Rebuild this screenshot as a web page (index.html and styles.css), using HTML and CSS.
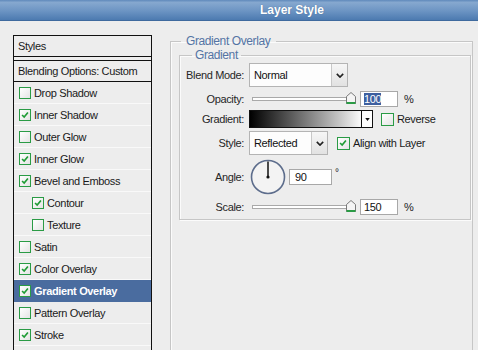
FILE: index.html
```html
<!DOCTYPE html>
<html>
<head>
<meta charset="utf-8">
<link rel="stylesheet" href="styles.css">
</head>
<body>
<div class="titlebar"><span class="title">Layer Style</span></div>
<div class="main">
  <div class="stylelist">
    <div class="head">Styles</div>
    <div class="blend">Blending Options: Custom</div>
    <div class="item"><span class="cb"></span>Drop Shadow</div>
    <div class="item"><span class="cb on"><svg viewBox="0 0 12 12"><polyline points="2.5,6 5,8.5 9.5,3"/></svg></span>Inner Shadow</div>
    <div class="item"><span class="cb"></span>Outer Glow</div>
    <div class="item"><span class="cb on"><svg viewBox="0 0 12 12"><polyline points="2.5,6 5,8.5 9.5,3"/></svg></span>Inner Glow</div>
    <div class="item"><span class="cb on"><svg viewBox="0 0 12 12"><polyline points="2.5,6 5,8.5 9.5,3"/></svg></span>Bevel and Emboss</div>
    <div class="item sub"><span class="cb on"><svg viewBox="0 0 12 12"><polyline points="2.5,6 5,8.5 9.5,3"/></svg></span>Contour</div>
    <div class="item sub"><span class="cb"></span>Texture</div>
    <div class="item"><span class="cb"></span>Satin</div>
    <div class="item"><span class="cb on"><svg viewBox="0 0 12 12"><polyline points="2.5,6 5,8.5 9.5,3"/></svg></span>Color Overlay</div>
    <div class="item selected"><span class="cb on"><svg viewBox="0 0 12 12"><polyline points="2.5,6 5,8.5 9.5,3"/></svg></span>Gradient Overlay</div>
    <div class="item"><span class="cb"></span>Pattern Overlay</div>
    <div class="item"><span class="cb on"><svg viewBox="0 0 12 12"><polyline points="2.5,6 5,8.5 9.5,3"/></svg></span>Stroke</div>
  </div>

  <fieldset class="outer">
    <legend>Gradient Overlay</legend>
    <fieldset class="inner">
      <legend>Gradient</legend>
      <div class="grid">
        <label class="lbl">Blend Mode:</label>
        <div class="ctl">
          <div class="select wide"><span class="val">Normal</span><span class="arrow"><svg viewBox="0 0 10 6"><polyline points="1,1 5,5 9,1"/></svg></span></div>
        </div>

        <label class="lbl">Opacity:</label>
        <div class="ctl">
          <div class="slider"><div class="track"></div><div class="thumb"><svg viewBox="0 0 10 12"><polygon points="0.5,4.5 5,0.5 9.5,4.5 9.5,11.5 0.5,11.5"/><line x1="0.5" y1="11" x2="9.5" y2="11"/></svg></div></div>
          <div class="num"><span class="sel">100</span></div>
          <span class="pct">%</span>
        </div>

        <label class="lbl">Gradient:</label>
        <div class="ctl">
          <div class="gradbar"><div class="grad"></div><div class="garrow"><svg viewBox="0 0 6 4"><polygon points="0,0 6,0 3,4"/></svg></div></div>
          <span class="cb gap8"></span><span class="cbtext">Reverse</span>
        </div>

        <label class="lbl">Style:</label>
        <div class="ctl">
          <div class="select narrow"><span class="val">Reflected</span><span class="arrow"><svg viewBox="0 0 10 6"><polyline points="1,1 5,5 9,1"/></svg></span></div>
          <span class="cb on gap9"><svg viewBox="0 0 12 12"><polyline points="2.5,6 5,8.5 9.5,3"/></svg></span><span class="cbtext">Align with Layer</span>
        </div>

        <label class="lbl">Angle:</label>
        <div class="ctl">
          <div class="dial"><svg viewBox="0 0 36 36"><circle class="ring" cx="18" cy="18" r="16.5"/><line x1="18" y1="18" x2="18" y2="2.5"/><circle class="dot" cx="18" cy="18" r="1.6"/></svg></div>
          <div class="num angle">90</div>
          <span class="deg">°</span>
        </div>

        <label class="lbl">Scale:</label>
        <div class="ctl">
          <div class="slider"><div class="track"></div><div class="thumb"><svg viewBox="0 0 10 12"><polygon points="0.5,4.5 5,0.5 9.5,4.5 9.5,11.5 0.5,11.5"/><line x1="0.5" y1="11" x2="9.5" y2="11"/></svg></div></div>
          <div class="num">150</div>
          <span class="pct">%</span>
        </div>
      </div>
    </fieldset>
  </fieldset>
</div>
</body>
</html>
```

FILE: styles.css
```css
html, body {
  margin: 0;
  padding: 0;
  width: 478px;
  height: 350px;
  overflow: hidden;
  background: #ededed;
  font-family: "Liberation Sans", Arial, sans-serif;
  font-size: 11px;
  letter-spacing: -0.35px;
  color: #1a1a1a;
}

.titlebar {
  height: 21px;
  box-sizing: border-box;
  background: linear-gradient(#5f89bb 0, #86a8cf 12%, #6c94c3 55%, #4c7ab0 100%);
  border-bottom: 1px solid #3f6a9e;
  display: flex;
  align-items: center;
  padding-left: 260px;
}
.title {
  color: #fff;
  font-weight: bold;
  font-size: 12px;
  letter-spacing: 0;
  text-shadow: 0 0 1px rgba(40, 70, 110, 0.6);
}

.main {
  display: flex;
  align-items: flex-start;
}

/* left style list */
.stylelist {
  margin-left: 13px;
  margin-top: 14px;
  width: 139px;
  height: 315px;
  box-sizing: border-box;
  border: 1px solid #111;
  border-bottom: none;
}
.head {
  height: 20px;
  border-bottom: 1px solid #111;
  padding-left: 4px;
  line-height: 20px;
  margin-bottom: 3px;
}
.blend {
  height: 20px;
  border-top: 1px solid #111;
  border-bottom: 1px solid #111;
  padding-left: 4px;
  line-height: 20px;
}
.item {
  height: 21px;
  border-bottom: 1px solid #f9f9f9;
  display: flex;
  align-items: center;
  padding-left: 5px;
}
.item.sub {
  padding-left: 18px;
}
.item.selected {
  background: #4a6c9f;
  color: #fff;
  font-weight: bold;
  border-bottom-color: #4a6c9f;
}

.cb {
  width: 12px;
  height: 12px;
  box-sizing: border-box;
  border: 1px solid #2a9b45;
  background: linear-gradient(135deg, #ffffff, #e4e4e4);
  margin-right: 3px;
  display: inline-flex;
  flex-shrink: 0;
}
.cb svg {
  width: 10px;
  height: 10px;
}
.cb polyline {
  fill: none;
  stroke: #1f9c35;
  stroke-width: 2;
}

/* right panel */
.outer {
  margin: 13px 0 0 18px;
  padding: 0 1px 0 8px;
  width: 303px;
  height: 316px;
  box-sizing: border-box;
  border: 1px solid #c6c6c6;
  border-bottom: none;
  box-shadow: inset 1px 1px 0 #fbfbfb;
  min-width: 0;
}
.outer > legend {
  margin-left: 2px;
  padding: 0 6px 0 5px;
  font-size: 12px;
  letter-spacing: -0.4px;
  line-height: 14px;
  color: #5474a4;
}
.inner {
  margin: 0;
  padding: 1px 0 4px 0;
  border: 1px solid #c6c6c6;
  box-shadow: inset 1px 1px 0 #fbfbfb, 1px 1px 0 #fbfbfb;
  min-width: 0;
}
.inner > legend {
  margin-left: 12px;
  padding: 0 3px;
  font-size: 12px;
  letter-spacing: -0.4px;
  line-height: 14px;
  color: #5474a4;
}

.grid {
  display: grid;
  grid-template-columns: 64px 1fr;
  grid-template-rows: 24px 17px 18px 24px 37px 17px;
  column-gap: 5px;
  row-gap: 3px;
}
.lbl {
  text-align: right;
  align-self: center;
  color: #262626;
}
.ctl {
  display: flex;
  align-items: center;
}

.select {
  height: 24px;
  box-sizing: border-box;
  border: 1px solid #b4b4b4;
  background: #fdfdfd;
  display: flex;
}
.select.wide { width: 99px; }
.select.narrow { width: 79px; }
.select .val {
  flex: 1;
  padding-left: 4px;
  line-height: 22px;
  color: #111;
}
.select .arrow {
  width: 15px;
  border-left: 1px solid #c8c8c8;
  background: linear-gradient(#f6f6f6, #e2e2e2);
  display: flex;
  align-items: center;
  justify-content: center;
}
.select .arrow svg {
  width: 8px;
  height: 5px;
}
.select .arrow polyline {
  fill: none;
  stroke: #222;
  stroke-width: 2;
}

.slider {
  position: relative;
  width: 108px;
  height: 17px;
}
.track {
  position: absolute;
  left: 3px;
  top: 7px;
  width: 100px;
  height: 4px;
  box-sizing: border-box;
  border: 1px solid #a9a9a9;
  background: #fff;
}
.thumb {
  position: absolute;
  left: 97px;
  top: 2px;
  width: 10px;
  height: 12px;
}
.thumb svg {
  width: 10px;
  height: 12px;
  display: block;
}
.thumb polygon {
  fill: #f4f4f4;
  stroke: #7a7a7a;
  stroke-width: 1;
}
.thumb line {
  stroke: #2a9b45;
  stroke-width: 2;
}

.num {
  margin-left: 3px;
  width: 38px;
  height: 16px;
  box-sizing: border-box;
  border: 1px solid #a8a8a8;
  background: #fff;
  padding-left: 3px;
  line-height: 14px;
  color: #111;
}
.num .sel {
  background: #3d5f9f;
  color: #fff;
}
.num.angle {
  margin-left: 3px;
  width: 43px;
  padding-left: 5px;
}
.pct {
  margin-left: 6px;
  color: #222;
}
.deg {
  margin-left: 3px;
  align-self: flex-start;
  margin-top: 9px;
  font-size: 10px;
}

.gradbar {
  width: 124px;
  height: 18px;
  box-sizing: border-box;
  border: 1px solid #111;
  display: flex;
}
.grad {
  flex: 1;
  background: linear-gradient(to right, #000 0%, #555 35%, #c4c4c4 80%, #fafafa 100%);
}
.garrow {
  width: 10px;
  border-left: 1px solid #111;
  background: #fff;
  display: flex;
  align-items: center;
  justify-content: center;
}
.garrow svg {
  width: 5px;
  height: 3px;
}
.garrow polygon { fill: #111; }

.gap8 { margin-left: 8px; width: 13px; height: 13px; }
.gap9 { margin-left: 9px; width: 13px; height: 13px; }
.cbtext {
  margin-left: 0;
  color: #1a1a1a;
}

.dial {
  margin-left: 1px;
  width: 36px;
  height: 36px;
}
.dial svg {
  width: 36px;
  height: 36px;
  display: block;
}
.dial .ring {
  fill: #f3f3f3;
  stroke: #5d6d8c;
  stroke-width: 1.6;
}
.dial line {
  stroke: #111;
  stroke-width: 1.5;
}
.dial .dot { fill: #111; }
```
